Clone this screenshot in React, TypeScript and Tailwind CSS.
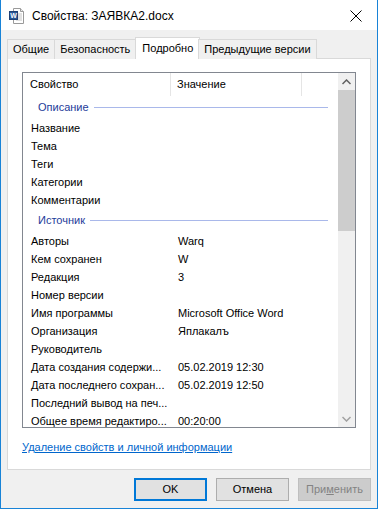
import React from "react"

type Row = { name: string; value?: string }

const groups: { title: string; rows: Row[] }[] = [
  {
    title: "Описание",
    rows: [{ name: "Название" }, { name: "Тема" }, { name: "Теги" }, { name: "Категории" }, { name: "Комментарии" }],
  },
  {
    title: "Источник",
    rows: [
      { name: "Авторы", value: "Warq" },
      { name: "Кем сохранен", value: "W" },
      { name: "Редакция", value: "3" },
      { name: "Номер версии" },
      { name: "Имя программы", value: "Microsoft Office Word" },
      { name: "Организация", value: "Яплакалъ" },
      { name: "Руководитель" },
      { name: "Дата создания содержи...", value: "05.02.2019 12:30" },
      { name: "Дата последнего сохран...", value: "05.02.2019 12:50" },
      { name: "Последний вывод на печ..." },
      { name: "Общее время редактиро...", value: "00:20:00" },
    ],
  },
]

const tabs = ["Общие", "Безопасность", "Подробно", "Предыдущие версии"]

function WordIcon() {
  return (
    <svg width="16" height="16" viewBox="0 0 16 16">
      <path d="M4.5 0.5h7l3 3v12h-10z" fill="#fff" stroke="#9a9a9a" />
      <path d="M11.5 0.5v3h3" fill="#e8e8e8" stroke="#9a9a9a" />
      <path d="M7 6h6M7 8h6M7 10h6M7 12h6" stroke="#c3c3c3" />
      <rect x="0.5" y="3.5" width="8" height="8" fill="#2b5797" stroke="#1e3f73" />
      <text x="4.5" y="10" textAnchor="middle" fontSize="7" fontWeight="bold" fill="#fff" fontFamily="Liberation Sans, sans-serif">W</text>
    </svg>
  )
}

function GroupHeader({ title }: { title: string }) {
  return (
    <div className="flex h-[23px] items-center pl-[15px] pr-[10px]">
      <span className="text-[#1e3c9a]">{title}</span>
      <div className="ml-[5px] h-px flex-1 bg-[#a9b8ea]" />
    </div>
  )
}

export default function App() {
  return (
    <div
      className="flex h-[509px] w-[378px] flex-col border-x border-b border-[#1883d7] bg-[#f0f0f0] text-[11px] text-black"
      style={{ fontFamily: '"Liberation Sans", Arial, sans-serif' }}
    >
      {/* title bar */}
      <div className="flex h-[30px] shrink-0 items-center bg-white pl-[8px] pr-[15px] pt-[1px] text-[12px]">
        <WordIcon />
        <span className="ml-[7px] flex-1">Свойства: ЗАЯВКА2.docx</span>
        <svg width="12" height="12" viewBox="0 0 12 12">
          <path d="M0.5 0.5l11 11M11.5 0.5l-11 11" stroke="#000" strokeWidth="1" />
        </svg>
      </div>

      <div className="flex flex-1 flex-col px-[6px] pt-[7px]">
        {/* tabs */}
        <div className="relative z-10 flex h-[22px] items-end">
          {tabs.map((t) => {
            const active = t === "Подробно"
            return active ? (
              <div key={t} className="-mx-[1px] flex h-[22px] items-center border border-b-0 border-[#d9d9d9] bg-white px-[6px]">
                {t}
              </div>
            ) : (
              <div key={t} className="-ml-px flex h-[20px] items-center border border-b-0 border-[#d9d9d9] bg-[#f0f0f0] px-[5px] first:ml-0">
                {t}
              </div>
            )
          })}
        </div>

        {/* panel */}
        <div className="-mt-px flex h-[412px] flex-col border border-[#d9d9d9] bg-white px-[14px] pt-[13px]">
          <div className="flex h-[356px] overflow-hidden border border-[#828790]">
            <div className="flex-1 overflow-hidden">
              <div className="flex h-[23px] items-center">
                <div className="flex h-full w-[148px] items-center border-r border-[#e5e5e5] pl-[7px]">Свойство</div>
                <div className="flex h-full w-[131px] items-center border-r border-[#e5e5e5] pl-[6px]">Значение</div>
              </div>
              {groups.map((g) => (
                <div key={g.title}>
                  <GroupHeader title={g.title} />
                  {g.rows.map((r) => (
                    <div key={r.name} className="flex h-[18px] items-center whitespace-nowrap">
                      <div className="w-[149px] shrink-0 overflow-hidden pl-[8px]">{r.name}</div>
                      <div className="pl-[6px]">{r.value}</div>
                    </div>
                  ))}
                </div>
              ))}
            </div>
            {/* scrollbar */}
            <div className="flex w-[17px] flex-col bg-[#f0f0f0]">
              <div className="flex h-[17px] items-center justify-center">
                <svg width="9" height="6" viewBox="0 0 9 6">
                  <path d="M0.5 5L4.5 1L8.5 5" fill="none" stroke="#606060" strokeWidth="1.5" />
                </svg>
              </div>
              <div className="h-[141px] bg-[#cdcdcd]" />
              <div className="flex-1" />
              <div className="flex h-[17px] items-center justify-center">
                <svg width="9" height="6" viewBox="0 0 9 6">
                  <path d="M0.5 1L4.5 5L8.5 1" fill="none" stroke="#a0a0a0" strokeWidth="1.5" />
                </svg>
              </div>
            </div>
          </div>
          <div className="pt-[11px]">
            <span className="text-[#0066cc] underline">Удаление свойств и личной информации</span>
          </div>
        </div>

        {/* buttons */}
        <div className="flex justify-end gap-[9px] pt-[8px]">
          <button className="h-[23px] w-[73px] border-2 border-[#0078d7] bg-[#e1e1e1]">OK</button>
          <button className="h-[23px] w-[73px] border border-[#adadad] bg-[#e1e1e1]">Отмена</button>
          <button className="h-[23px] w-[73px] border border-[#bfbfbf] bg-[#cccccc] text-[#838383]">
            При<span className="underline">м</span>енить
          </button>
        </div>
      </div>
    </div>
  )
}
